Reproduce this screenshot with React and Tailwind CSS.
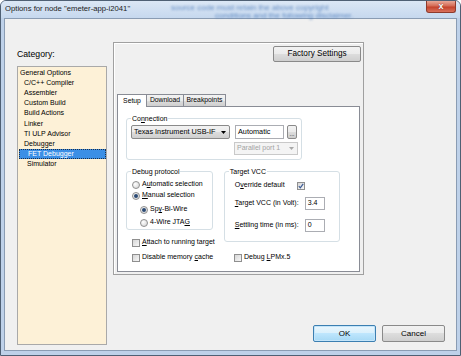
import React from 'react';

// Win7 style "Options for node" dialog

const Arrow = ({ color = '#000' }) => (
  <svg width="5" height="3" viewBox="0 0 5 3">
    <path d="M0 0h5L2.5 3z" fill={color} />
  </svg>
);

const Radio = ({ checked }) => (
  <div className="w-[8px] h-[8px] rounded-full border border-[#8f8f8f] bg-[radial-gradient(circle_at_35%_35%,#ffffff,#d0d0d0)] flex items-center justify-center shrink-0">
    {checked && <div className="w-[4px] h-[4px] rounded-full bg-[#2b4a74]" />}
  </div>
);

const Check = ({ checked }) => (
  <div className="w-[8px] h-[8px] border border-[#8f8f8f] bg-[linear-gradient(135deg,#d6d6d6,#f7f7f7)] flex items-center justify-center shrink-0">
    {checked && (
      <svg width="6" height="6" viewBox="0 0 6 6">
        <path d="M0.8 3.2 2.3 4.8 5.2 0.9" fill="none" stroke="#3a5a94" strokeWidth="1.2" />
      </svg>
    )}
  </div>
);

const Group = ({ label, className, children }) => (
  <div className={`relative border border-[#d5dfe5] rounded-[3px] ${className}`}>
    <span className="absolute -top-[5px] left-[4px] bg-white px-[1px] leading-[9px]">{label}</span>
    {children}
  </div>
);

const btn = 'bg-[linear-gradient(#f2f2f2,#ebebeb_50%,#dddddd_50%,#cfcfcf)] border border-[#8a8a8a] rounded-[2px]';

const items = [
  ['General Options', 'pl-[2px]'],
  ['C/C++ Compiler', 'pl-[6px]'],
  ['Assembler', 'pl-[6px]'],
  ['Custom Build', 'pl-[6px]'],
  ['Build Actions', 'pl-[6px]'],
  ['Linker', 'pl-[6px]'],
  ['TI ULP Advisor', 'pl-[6px]'],
  ['Debugger', 'pl-[6px]'],
  ['FET Debugger', 'pl-[9px]', true],
  ['Simulator', 'pl-[9px]'],
];

export default function App() {
  return (
    <div className="w-[461px] h-[356px] relative overflow-hidden rounded-t-[6px] border border-[#4f6074] bg-[#bed1e9] font-['Liberation_Sans',Arial,sans-serif] text-black">
      {/* title bar */}
      <div className="relative h-[17px] flex justify-between bg-[linear-gradient(#dbe7f5,#c6d8ee)]">
        <span className="absolute left-[170px] top-[1px] text-[8px] text-[#3d6fb3] blur-[1px] opacity-70 whitespace-nowrap">
          source code must retain the above copyright
        </span>
        <span className="absolute left-[214px] top-[9px] text-[8px] text-[#3d6fb3] blur-[1px] opacity-70 whitespace-nowrap">
          conditions and the following disclaimer.
        </span>
        <span className="relative pl-[4px] pt-[3px] text-[7.7px] leading-[9px] text-[#1b1b1b]">
          Options for node "emeter-app-i2041"
        </span>
        <div className="relative mr-[4px] w-[30px] h-[12px] rounded-b-[3px] border border-t-0 border-[#8e3a2c] bg-[linear-gradient(#e9a898,#d46a55_45%,#c4432c_55%,#d9715c)] flex items-center justify-center">
          <span className="text-white text-[9px] font-bold leading-none [text-shadow:0_0_1px_#5a1a10]">x</span>
        </div>
      </div>

      {/* client area */}
      <div className="mx-[3px] h-[333px] bg-[#f0f0f0] border border-[#8a9cb3] flex pl-[12px] pr-[11px]">
        {/* category column */}
        <div className="w-[90px] flex flex-col">
          <div className="mt-[30px] h-[17px] text-[8.7px] leading-[10px]">Category:</div>
          <div className="h-[279px] border border-[#a9a9a9] bg-[#fdf1d7] pt-[1px] text-[7px]">
            {items.map(([name, pad, sel]) => (
              <div
                key={name}
                className={`h-[10.1px] leading-[10px] flex items-center ${sel ? 'ml-[1px] border border-dotted border-[#1b2f4a] bg-[#3b8fe6] text-white pl-[8px]' : pad}`}
              >
                {name}
              </div>
            ))}
          </div>
        </div>

        {/* right side */}
        <div className="flex-1 ml-[6px] flex flex-col">
          <div className="mt-[23px] w-[251px] h-[233px] border border-[#a0a0a0] shadow-[inset_1px_1px_0_#ffffff] flex flex-col">
            <div className="flex justify-end pr-[2px] pt-[3px]">
              <div className={`${btn} w-[88px] h-[16px] flex items-center justify-center text-[8.2px]`}>Factory Settings</div>
            </div>

            {/* tabs */}
            <div className="mt-[31px] ml-[3px] flex items-end text-[6.8px]">
              <div className="w-[30px] h-[13px] bg-white border border-b-0 border-[#898c95] flex items-center justify-center relative top-[1px] z-10">Setup</div>
              <div className={`w-[37px] h-[12px] border border-[#898c95] border-l-0 border-b-0 bg-[linear-gradient(#f2f2f2,#ebebeb_50%,#dddddd_50%,#cfcfcf)] flex items-center justify-center`}>Download</div>
              <div className={`w-[42px] h-[12px] border border-[#898c95] border-l-0 border-b-0 bg-[linear-gradient(#f2f2f2,#ebebeb_50%,#dddddd_50%,#cfcfcf)] flex items-center justify-center`}>Breakpoints</div>
            </div>

            {/* tab page */}
            <div className="ml-[3px] w-[243px] h-[166px] bg-white border border-[#898c95] pl-[8px] pt-[11px] text-[7px]">
              <Group label={<>Co<u>n</u>nection</>} className="w-[176px] h-[42px] flex pl-[4px] pt-[6px]">
                <div className={`${btn} w-[99px] h-[14px] flex items-center justify-between pl-[2px] pr-[3px] text-[7.3px]`}>
                  <span>Texas Instrument USB-IF</span>
                  <Arrow />
                </div>
                <div className="ml-[5px] flex flex-col">
                  <div className="flex">
                    <div className="w-[49px] h-[14px] border border-[#abadb3] bg-white flex items-center pl-[2px] text-[7.3px]">Automatic</div>
                    <div className={`${btn} ml-[3px] w-[10px] h-[14px] flex items-end justify-center text-[6px] leading-[8px]`}>...</div>
                  </div>
                  <div className="-ml-[1px] mt-[3px] w-[64px] h-[13px] border border-[#c9c9c9] bg-[#f4f4f4] flex items-center justify-between pl-[2px] pr-[3px] text-[#a3a3a3]">
                    <span>Parallel port 1</span>
                    <Arrow color="#a8a8a8" />
                  </div>
                </div>
              </Group>

              <div className="flex mt-[11px]">
                <div className="flex flex-col">
                  <Group label="Debug protocol" className="w-[87px] h-[59px] flex flex-col pl-[5px] pt-[7px]">
                    <div className="h-[11px] flex items-center gap-[2px]"><Radio /><span>A<u>u</u>tomatic selection</span></div>
                    <div className="h-[11px] flex items-center gap-[2px]"><Radio checked /><span><u>M</u>anual selection</span></div>
                    <div className="h-[11px] mt-[3px] ml-[8px] flex items-center gap-[2px]"><Radio checked /><span>Sp<u>y</u>-Bi-Wire</span></div>
                    <div className="h-[11px] mt-[2px] ml-[8px] flex items-center gap-[2px]"><Radio /><span>4-Wire JTA<u>G</u></span></div>
                  </Group>
                  <div className="h-[11px] mt-[7px] ml-[6px] flex items-center gap-[2px]"><Check /><span><u>A</u>ttach to running target</span></div>
                </div>

                <Group label="Target VCC" className="ml-[9px] w-[116px] h-[71px] flex flex-col pl-[10px] pt-[8px]">
                  <div className="h-[11px] flex items-center">
                    <span className="w-[62px]">O<u>v</u>erride default</span>
                    <Check checked />
                  </div>
                  <div className="mt-[6px] h-[13px] flex items-center">
                    <span className="w-[70px]"><u>T</u>arget VCC (in Volt):</span>
                    <div className="w-[20px] h-[13px] border border-[#abadb3] bg-white flex items-center pl-[2px]">3.4</div>
                  </div>
                  <div className="mt-[9px] h-[13px] flex items-center">
                    <span className="w-[70px]"><u>S</u>ettling time (in ms):</span>
                    <div className="w-[20px] h-[13px] border border-[#abadb3] bg-white flex items-center pl-[2px]">0</div>
                  </div>
                </Group>
              </div>

              <div className="flex mt-[4px] ml-[6px] h-[11px] items-center">
                <div className="w-[102px] flex items-center gap-[2px]"><Check /><span>Disable memory <u>c</u>ache</span></div>
                <div className="flex items-center gap-[2px]"><Check /><span>Debug <u>L</u>PMx.5</span></div>
              </div>
            </div>
          </div>

          <div className="flex-1" />

          <div className="flex justify-end gap-[6px] pb-[8px] text-[8px]">
            <div className="w-[63px] h-[17px] rounded-[2px] border border-[#3c7fb1] shadow-[inset_0_0_0_1px_#c4e5fa] bg-[linear-gradient(#eaf6fd,#d9f0fc_50%,#bee6fd_50%,#a7d9f5)] flex items-center justify-center">OK</div>
            <div className={`${btn} w-[63px] h-[17px] flex items-center justify-center`}>Cancel</div>
          </div>
        </div>
      </div>
    </div>
  );
}
